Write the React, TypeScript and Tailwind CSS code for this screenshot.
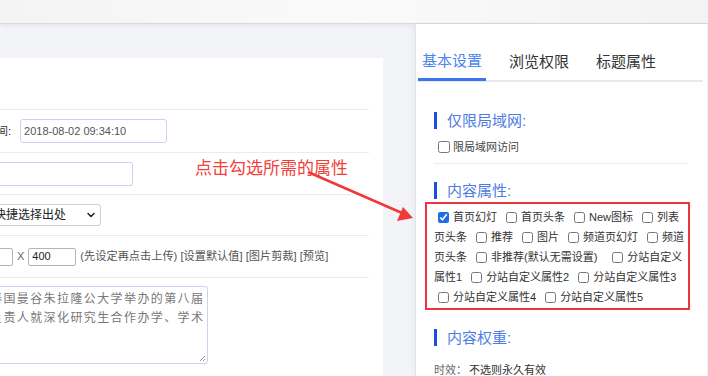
import { ChevronDown } from "lucide-react";

const font = { fontFamily: '"Liberation Sans", "Noto Sans CJK SC", sans-serif' };

const attrs = [
  { label: "首页幻灯", checked: true },
  { label: "首页头条" },
  { label: "New图标" },
  { label: "列表页头条" },
  { label: "推荐" },
  { label: "图片" },
  { label: "频道页幻灯" },
  { label: "频道页头条" },
  { label: "非推荐(默认无需设置)", wide: true },
  { label: "分站自定义属性1" },
  { label: "分站自定义属性2" },
  { label: "分站自定义属性3" },
  { label: "分站自定义属性4" },
  { label: "分站自定义属性5" },
];

const SectionTitle = ({ text }: { text: string }) => (
  <div className="flex items-center h-[17px]">
    <span className="w-[3px] h-[17px] bg-[#1d4ed8]" />
    <span className="ml-[10px] text-[15px] leading-[17px] text-[#4f7ce3]">{text}</span>
  </div>
);

const LeftPanel = () => (
  <div className="w-[383px] h-full bg-white pr-[14px] overflow-hidden text-[11px] text-[#555]">
    <div className="h-[52px] border-b border-[#ebebeb]" />
    <div className="flex items-center h-[43px] border-b border-[#ebebeb]">
      <span className="-ml-[36px] text-[#333]">发布时间:</span>
      <div className="ml-[9px] w-[147px] h-[24px] border border-[#c9d2ee] rounded-[3px] flex items-center px-[3px] text-[11px] text-[#555]">
        2018-08-02 09:34:10
      </div>
    </div>
    <div className="flex items-center h-[42px] border-b border-[#ebebeb]">
      <div className="-ml-[17px] w-[150px] h-[24px] border border-[#c9d2ee] rounded-[3px]" />
    </div>
    <div className="flex items-center h-[41px] border-b border-[#ebebeb]">
      <div className="-ml-[13px] w-[114px] h-[22px] border border-[#cfcfcf] rounded-[3px] flex items-center justify-between pl-[6px] pr-[3px] text-[12px] text-[#222]">
        <span>快捷选择出处</span>
        <ChevronDown size={12} strokeWidth={3} className="text-[#222]" />
      </div>
    </div>
    <div className="flex items-center h-[42px] border-b border-[#ebebeb] whitespace-nowrap">
      <div className="-ml-[30px] w-[43px] h-[18px] border border-[#b5b5b5] rounded-[2px]" />
      <span className="mx-[4px] text-[#666]">X</span>
      <div className="w-[48px] h-[18px] border border-[#b5b5b5] rounded-[2px] flex items-center px-[3px] text-[#222]">400</div>
      <span className="ml-[4px] text-[11.2px] text-[#555]">(先设定再点击上传) [设置默认值] [图片剪裁] [预览]</span>
    </div>
    <div className="pt-[8px]">
      <div className="relative -ml-[14px] w-[222px] h-[78px] border border-[#c9d2ee] rounded-[3px] px-[3px] pt-[3px] text-[12px] leading-[19px] tracking-[1.4px] text-[#777] whitespace-nowrap">
        <div>泰国曼谷朱拉隆公大学举办的第八届</div>
        <div>负责人就深化研究生合作办学、学术</div>
        <svg className="absolute right-[1px] bottom-[1px]" width="8" height="8" viewBox="0 0 8 8">
          <path d="M7 2 L2 7 M7 5 L5 7" stroke="#999" strokeWidth="1" />
        </svg>
      </div>
    </div>
  </div>
);

const RightPanel = () => (
  <div className="w-[292px] h-full bg-white border-l border-[#e3e4e8] shadow-[-2px_0_4px_rgba(0,0,0,0.04)] pt-[20px] pl-[2px] pr-[4px]">
    <div className="flex gap-[19px] border-b-[2px] border-[#e6e9ef]">
      <div className="h-[37px] px-[4px] flex items-center text-[15px] text-[#4a86f0] border-b-[3px] border-[#3a74ee] -mb-[2px]">基本设置</div>
      <div className="h-[36px] px-[4px] flex items-center text-[15px] text-[#333]">浏览权限</div>
      <div className="h-[36px] px-[4px] flex items-center text-[15px] text-[#333]">标题属性</div>
    </div>
    <div className="pl-[16px] pr-[15px]">
      <div className="mt-[30px]">
        <SectionTitle text="仅限局域网:" />
      </div>
      <div className="mt-[11px] flex items-center h-[14px] text-[11px] text-[#444]">
        <input type="checkbox" className="ml-[4px] mr-[3px] w-[12px] h-[12px]" />
        <span>限局域网访问</span>
      </div>
      <div className="mt-[9px] h-[1px] bg-[#ececec]" />
      <div className="mt-[18px]">
        <SectionTitle text="内容属性:" />
      </div>
      <div className="mt-[3px] -ml-[9px] -mr-[2px] border-[2px] border-[#e8383b] pl-[7px] pt-[3px] pb-[1px] text-[11px] leading-[20px] text-[#333]">
        {attrs.map((a) => (
          <span key={a.label} className={a.wide ? "mr-[11px]" : "mr-[5px]"}>
            <input
              type="checkbox"
              defaultChecked={a.checked}
              className="ml-[4px] mr-[4px] w-[11px] h-[11px] align-[-2px] accent-[#1b6fe3]"
            />
            {a.label}
          </span>
        ))}
      </div>
      <div className="mt-[19px]">
        <SectionTitle text="内容权重:" />
      </div>
      <div className="mt-[16px] text-[11px] text-[#333]">
        <span className="text-[#666]">时效：</span>
        <span className="ml-[2px]">不选则永久有效</span>
      </div>
    </div>
  </div>
);

export default function App() {
  return (
    <div className="relative w-[708px] h-[376px] overflow-hidden bg-[#f3f4f8] flex flex-col" style={font}>
      <div className="h-[24px] shrink-0 bg-gradient-to-r from-[#f4f4f4] via-[#fafafa] to-[#f3f3f3] border-b border-[#d9d9d9] shadow-[0_2px_5px_rgba(0,0,0,0.06)]" />
      <div className="flex flex-1 min-h-0">
        <div className="pt-[34px] h-full">
          <LeftPanel />
        </div>
        <div className="ml-[32px] h-full">
          <RightPanel />
        </div>
      </div>
      <div className="absolute left-[195px] top-[158px] text-[17px] leading-[22px] text-[#f23f3c] whitespace-nowrap">
        点击勾选所需的属性
      </div>
      <svg className="absolute left-0 top-0 pointer-events-none" width="708" height="376">
        <line x1="308" y1="172" x2="402" y2="213" stroke="#f03a3a" strokeWidth="2.5" />
        <polygon points="413,218 397,221 403,207" fill="#f03a3a" />
      </svg>
    </div>
  );
}
